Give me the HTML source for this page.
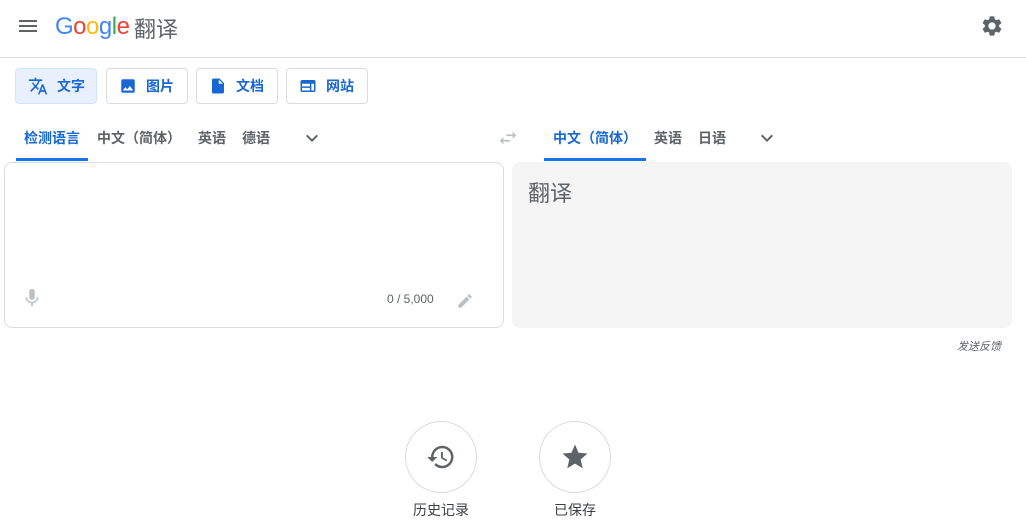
<!DOCTYPE html><html><head><meta charset="utf-8"><style>
*{margin:0;padding:0;box-sizing:border-box}
body{width:1026px;height:519px;background:#fff;font-family:"Liberation Sans","Noto Sans CJK SC",sans-serif;position:relative;overflow:hidden;color:#5f6368}
.a{position:absolute}
.hdr{left:0;top:0;width:1026px;height:58px;border-bottom:1px solid #dadce0}
.btn{top:68px;height:36px;border:1px solid #dadce0;border-radius:4px;font-size:14px;color:#1967d2;display:flex;align-items:center;padding-left:12px;gap:9px;font-weight:bold}
.tab{top:128px;font-size:14px;color:#5f6368;font-weight:bold}
.circ{width:72px;height:72px;border:1px solid #dadce0;border-radius:50%;top:421px;display:flex;align-items:center;justify-content:center}
.lbl{top:500px;font-size:14px;color:#3c4043;width:80px;text-align:center}
</style></head><body>
<div class="a hdr"></div>
<svg class="a" style="left:16px;top:14px" width="24" height="24" viewBox="0 0 24 24"><path d="M3 18h18v-2H3v2zm0-5h18v-2H3v2zm0-7v2h18V6H3z" fill="#5f6368"/></svg>
<div class="a" style="left:55px;top:13px;font-size:24px;letter-spacing:-0.5px"><span style="color:#4285f4">G</span><span style="color:#ea4335">o</span><span style="color:#fbbc05">o</span><span style="color:#4285f4">g</span><span style="color:#34a853">l</span><span style="color:#ea4335">e</span></div>
<div class="a" style="left:134px;top:12px;font-size:22px;color:#5f6368">翻译</div>
<svg class="a" style="left:980px;top:14px" width="24" height="24" viewBox="0 0 24 24"><path fill="#5f6368" d="M19.14 12.94c.04-.3.06-.61.06-.94 0-.32-.02-.64-.07-.94l2.03-1.58a.49.49 0 0 0 .12-.61l-1.92-3.32a.49.49 0 0 0-.59-.22l-2.39.96c-.5-.38-1.030-.7-1.62-.94l-.36-2.54a.48.48 0 0 0-.48-.41h-3.84c-.24 0-.43.17-.47.41l-.36 2.54c-.59.24-1.13.57-1.62.94l-2.39-.96a.48.48 0 0 0-.59.22L2.74 8.87c-.12.21-.08.47.12.61l2.03 1.58c-.05.3-.09.63-.09.94s.02.64.07.94l-2.03 1.58a.49.49 0 0 0-.12.61l1.92 3.32c.12.22.37.29.59.22l2.39-.96c.5.38 1.03.7 1.62.94l.36 2.54c.05.24.24.41.48.41h3.84c.24 0 .44-.17.47-.41l.36-2.54c.59-.24 1.13-.56 1.62-.94l2.39.96c.22.08.47 0 .59-.22l1.92-3.32c.12-.22.07-.47-.12-.61l-2.01-1.580zM12 15.6c-1.98 0-3.6-1.62-3.6-3.6s1.62-3.6 3.6-3.6 3.6 1.62 3.6 3.6-1.62 3.6-3.6 3.6z"/></svg>
<div class="a btn" style="left:15px;width:82px;background:#e8f0fe;border-color:#d2e3fc"><svg width="20" height="20" viewBox="0 0 24 24"><path fill="#1967d2" d="M12.87 15.07l-2.54-2.51.03-.03A17.5 17.5 0 0 0 14.07 6H17V4h-7V2H8v2H1v2h11.17C11.5 7.92 10.44 9.75 9 11.35 8.07 10.32 7.3 9.19 6.69 8h-2c.73 1.63 1.73 3.17 2.98 4.56l-5.09 5.02L4 19l5-5 3.11 3.11.76-2.04zM18.5 10h-2L12 22h2l1.12-3h4.75L21 22h2l-4.5-12zm-2.62 7l1.62-4.33L19.12 17h-3.24z"/></svg>文字</div>
<div class="a btn" style="left:106px;width:82px"><svg width="18" height="18" viewBox="0 0 24 24"><path fill="#1967d2" d="M21 19V5c0-1.1-.9-2-2-2H5c-1.1 0-2 .9-2 2v14c0 1.1.9 2 2 2h14c1.1 0 2-.9 2-2zM8.5 13.5l2.5 3 3.5-4.5 4.5 6H5l3.5-4.5z"/></svg>图片</div>
<div class="a btn" style="left:196px;width:82px"><svg width="18" height="18" viewBox="0 0 24 24"><path fill="#1967d2" d="M6 2c-1.1 0-2 .9-2 2v16c0 1.1.9 2 2 2h12c1.1 0 2-.9 2-2V8l-6-6H6zm7 7V3.5L18.5 9H13z"/></svg>文档</div>
<div class="a btn" style="left:286px;width:82px"><svg width="18" height="18" viewBox="0 0 24 24"><path fill="#1967d2" d="M20 4H4c-1.1 0-2 .9-2 2v12c0 1.1.9 2 2 2h16c1.1 0 2-.9 2-2V6c0-1.1-.9-2-2-2zM4 9h10.5v3.5H4V9zm0 5.5h10.5V18H4v-3.5zM20 18h-3.5V9H20v9z"/></svg>网站</div>
<div class="a tab" style="left:24px;color:#1967d2">检测语言</div>
<div class="a" style="left:16px;top:158px;width:72px;height:3px;background:#1a73e8"></div>
<div class="a tab" style="left:97px">中文（简体）</div>
<div class="a tab" style="left:198px">英语</div>
<div class="a tab" style="left:242px">德语</div>
<svg class="a" style="left:300px;top:126px" width="24" height="24" viewBox="0 0 24 24"><path d="M7.4 8.6L12 13.2l4.6-4.6L18 10l-6 6-6-6z" fill="#5f6368"/></svg>
<svg class="a" style="left:497px;top:127px" width="22" height="22" viewBox="0 0 24 24"><path d="M6.99 11L3 15l3.99 4v-3H14v-2H6.99v-3zM21 9l-3.99-4v3H10v2h7.01v3L21 9z" fill="#bdc1c6"/></svg>
<div class="a tab" style="left:553px;color:#1967d2">中文（简体）</div>
<div class="a" style="left:544px;top:158px;width:102px;height:3px;background:#1a73e8"></div>
<div class="a tab" style="left:654px">英语</div>
<div class="a tab" style="left:698px">日语</div>
<svg class="a" style="left:755px;top:126px" width="24" height="24" viewBox="0 0 24 24"><path d="M7.4 8.6L12 13.2l4.6-4.6L18 10l-6 6-6-6z" fill="#5f6368"/></svg>
<div class="a" style="left:4px;top:162px;width:500px;height:166px;border:1px solid #dadce0;border-radius:8px"></div>
<svg class="a" style="left:21px;top:287px" width="22" height="22" viewBox="0 0 24 24"><path fill="#bdc1c6" d="M12 14c1.66 0 3-1.34 3-3V5c0-1.66-1.34-3-3-3S9 3.34 9 5v6c0 1.66 1.34 3 3 3zm5.3-3c0 3-2.54 5.1-5.3 5.1S6.7 14 6.7 11H5c0 3.41 2.72 6.23 6 6.72V21h2v-3.28c3.28-.48 6-3.3 6-6.72h-1.7z"/></svg>
<div class="a" style="left:387px;top:292px;font-size:12px;color:#5f6368">0 / 5,000</div>
<svg class="a" style="left:456px;top:292px" width="18" height="18" viewBox="0 0 24 24"><path fill="#bdc1c6" d="M3 17.25V21h3.75L17.81 9.94l-3.75-3.75L3 17.25zM20.71 7.04a1 1 0 0 0 0-1.41l-2.34-2.34a1 1 0 0 0-1.41 0l-1.83 1.83 3.75 3.75 1.83-1.83z"/></svg>
<div class="a" style="left:512px;top:162px;width:500px;height:166px;background:#f5f5f5;border-radius:8px"></div>
<div class="a" style="left:528px;top:176px;font-size:22px;color:#5f6368">翻译</div>
<div class="a" style="left:957px;top:338px;font-size:11px;font-style:italic;color:#5f6368">发送反馈</div>
<div class="a circ" style="left:405px"><svg width="30" height="30" viewBox="0 0 24 24"><path fill="#5f6368" d="M13 3a9 9 0 0 0-9 9H1l3.89 3.89.07.14L9 12H6c0-3.87 3.13-7 7-7s7 3.13 7 7-3.13 7-7 7c-1.93 0-3.68-.79-4.94-2.06l-1.42 1.42A8.95 8.95 0 0 0 13 21a9 9 0 0 0 0-18zm-1 5v5l4.28 2.54.72-1.21-3.5-2.08V8H12z"/></svg></div>
<div class="a circ" style="left:539px"><svg width="30" height="30" viewBox="0 0 24 24"><path fill="#5f6368" d="M12 17.27L18.18 21l-1.64-7.03L22 9.24l-7.19-.61L12 2 9.19 8.63 2 9.24l5.46 4.73L5.82 21z"/></svg></div>
<div class="a lbl" style="left:401px">历史记录</div>
<div class="a lbl" style="left:535px">已保存</div>
</body></html>
